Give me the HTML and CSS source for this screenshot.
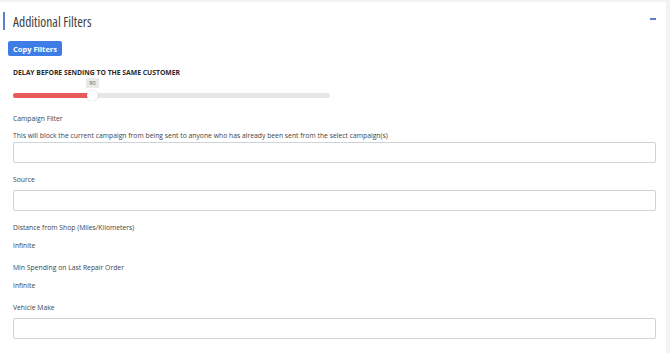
FILE: index.html
```html
<!DOCTYPE html>
<html>
<head>
<meta charset="utf-8">
<link rel="stylesheet" href="styles.css">
</head>
<body>
<div class="card">
  <div class="header">
    <h2 class="title">Additional Filters</h2>
    <span class="collapse"></span>
  </div>
  <div class="body">
    <button class="btn">Copy Filters</button>
    <div class="delay-label">DELAY BEFORE SENDING TO THE SAME CUSTOMER</div>
    <div class="slider">
      <div class="track"><div class="fill" style="width:24.6%"></div></div>
      <div class="thumb" style="left:24.6%"><span class="bubble">90</span></div>
    </div>
    <div class="field f-campaign">
      <div class="label">Campaign Filter</div>
      <div class="hint">This will block the current campaign from being sent to anyone who has already been sent from the select campaign(s)</div>
      <div class="input"></div>
    </div>
    <div class="field f-after-input">
      <div class="label">Source</div>
      <div class="input"></div>
    </div>
    <div class="field f-after-input">
      <div class="label">Distance from Shop (Miles/Kilometers)</div>
      <div class="value">Infinite</div>
    </div>
    <div class="field f-after-value">
      <div class="label">Min Spending on Last Repair Order</div>
      <div class="value">Infinite</div>
    </div>
    <div class="field f-after-value">
      <div class="label">Vehicle Make</div>
      <div class="input"></div>
    </div>
  </div>
</div>
</body>
</html>
```
FILE: styles.css
```css
html, body { margin: 0; padding: 0; }
body {
  background: #f3f3f4;
  font-family: "Open Sans", "Noto Sans", sans-serif;
  color: #3a3a3a;
  width: 670px;
  height: 353px;
  overflow: hidden;
}
.card {
  background: #fff;
  margin: 2px 4px 0 0;
  height: 351px;
  position: relative;
}
.header {
  display: flex;
  align-items: center;
  justify-content: space-between;
  height: 20px;
  padding-top: 10px;
  position: relative;
}
.header::before {
  content: "";
  position: absolute;
  left: 3px;
  top: 10px;
  width: 2px;
  height: 18px;
  background: #5b7fd1;
}
.title {
  margin: 0 0 0 13px;
  font-family: "Liberation Sans Narrow", "Open Sans", sans-serif;
  font-stretch: condensed;
  font-size: 13.5px;
  font-weight: 400;
  color: #404040;
}
.collapse {
  width: 6px;
  height: 2px;
  background: #5d7dc4;
  margin-right: 10px;
  margin-top: -7px;
}
.body {
  padding: 0 10px 0 8px;
}
.btn {
  margin-top: 9px;
  height: 15px;
  width: 54px;
  border: 0;
  border-radius: 2px;
  background: #3f7de6;
  color: #fff;
  font-family: inherit;
  font-size: 7.5px;
  font-weight: 700;
  padding: 0;
  display: block;
}
.delay-label {
  margin: 12px 0 0 5px;
  font-size: 6.8px;
  font-weight: 700;
  color: #2b2b2b;
  line-height: 9px;
}
.slider {
  position: relative;
  margin: 16px 0 0 5px;
  width: 317px;
  height: 5px;
}
.track {
  height: 5px;
  background: #e6e6e6;
  border-radius: 3px;
  overflow: hidden;
}
.fill {
  height: 100%;
  background: #e85a5a;
}
.thumb {
  position: absolute;
  top: -3px;
  width: 11px;
  height: 11px;
  margin-left: -4px;
  border-radius: 50%;
  background: #fff;
  box-shadow: 0 0 1px rgba(0,0,0,0.3);
}
.bubble {
  position: absolute;
  top: -12px;
  left: -1px;
  width: 13px;
  height: 10px;
  background: #e9e9e9;
  border-radius: 1px;
  font-size: 5.5px;
  line-height: 10px;
  text-align: center;
  color: #555;
}
.field {
  margin-left: 5px;
}
.label, .hint, .value {
  font-size: 6.8px;
  line-height: 9px;
  color: #444444;
}
.f-campaign { margin-top: 16px; }
.f-after-input { margin-top: 12px; }
.f-after-value { margin-top: 13px; }
.hint { margin-top: 8px; }
.value { margin-top: 9px; }
.input {
  margin-top: 2px;
  height: 19px;
  border: 1px solid #cfd2d6;
  border-radius: 2px;
  background: #fff;
}
.label + .input { margin-top: 6px; }
```
